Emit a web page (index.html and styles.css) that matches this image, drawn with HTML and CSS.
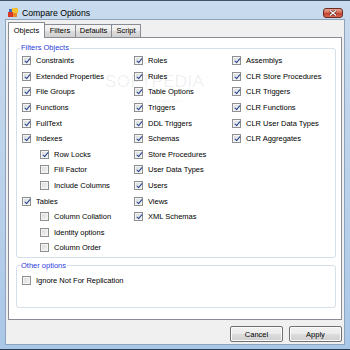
FILE: index.html
```html
<!DOCTYPE html>
<html lang="en">
  <head>
    <meta charset="UTF-8">
    <title>Compare Options</title>
    <link rel="stylesheet" href="styles.css">
  </head>
  <body>
    <div class="window">
      <div class="titlebar">
        <svg class="app-icon" width="10" height="10" viewBox="0 0 10 10">
          <rect x="4" y="0" width="6" height="5" fill="#f2c230"/>
          <rect x="0" y="4" width="5" height="5" fill="#d8382a"/>
          <rect x="1" y="1" width="3" height="3" fill="#3a6cc8"/>
          <rect x="5" y="5" width="4" height="4" fill="#e88a2a"/>
        </svg>
        <span class="title">Compare Options</span>
        <div class="close-btn">
          <svg width="8" height="6" viewBox="0 0 8 6">
            <path d="M1 0.5 L7 5.5 M7 0.5 L1 5.5" stroke="#5a1d16" stroke-width="2.4"/>
            <path d="M1 0.5 L7 5.5 M7 0.5 L1 5.5" stroke="#fff" stroke-width="1.3"/>
          </svg>
        </div>
      </div>

      <div class="client">
        <div class="tabs">
          <div class="tab active">Objects</div>
          <div class="tab tab-filters">Filters</div>
          <div class="tab tab-defaults">Defaults</div>
          <div class="tab tab-script">Script</div>
        </div>

        <div class="panel">
          <div class="watermark">
            <span class="wm-big">SOFTPEDIA<sup>™</sup></span>
            <span class="wm-small">www.softpedia.com</span>
          </div>

          <fieldset class="group filters">
            <legend>Filters Objects</legend>
            <div class="columns">
              <div class="col">
                <div class="row"><span class="cb on"></span>Constraints</div>
                <div class="row"><span class="cb on"></span>Extended Properties</div>
                <div class="row"><span class="cb on"></span>File Groups</div>
                <div class="row"><span class="cb on"></span>Functions</div>
                <div class="row"><span class="cb on"></span>FullText</div>
                <div class="row"><span class="cb on"></span>Indexes</div>
                <div class="row sub"><span class="cb on"></span>Row Locks</div>
                <div class="row sub"><span class="cb"></span>Fill Factor</div>
                <div class="row sub"><span class="cb"></span>Include Columns</div>
                <div class="row"><span class="cb on"></span>Tables</div>
                <div class="row sub"><span class="cb"></span>Column Collation</div>
                <div class="row sub"><span class="cb"></span>Identity options</div>
                <div class="row sub"><span class="cb"></span>Column Order</div>
              </div>
              <div class="col">
                <div class="row"><span class="cb on"></span>Roles</div>
                <div class="row"><span class="cb on"></span>Rules</div>
                <div class="row"><span class="cb on"></span>Table Options</div>
                <div class="row"><span class="cb on"></span>Triggers</div>
                <div class="row"><span class="cb on"></span>DDL Triggers</div>
                <div class="row"><span class="cb on"></span>Schemas</div>
                <div class="row"><span class="cb on"></span>Store Procedures</div>
                <div class="row"><span class="cb on"></span>User Data Types</div>
                <div class="row"><span class="cb on"></span>Users</div>
                <div class="row"><span class="cb on"></span>Views</div>
                <div class="row"><span class="cb on"></span>XML Schemas</div>
              </div>
              <div class="col">
                <div class="row"><span class="cb on"></span>Assemblys</div>
                <div class="row"><span class="cb on"></span>CLR Store Procedures</div>
                <div class="row"><span class="cb on"></span>CLR Triggers</div>
                <div class="row"><span class="cb on"></span>CLR Functions</div>
                <div class="row"><span class="cb on"></span>CLR User Data Types</div>
                <div class="row"><span class="cb on"></span>CLR Aggregates</div>
              </div>
            </div>
          </fieldset>

          <fieldset class="group other">
            <legend>Other options</legend>
            <div class="row"><span class="cb"></span>Ignore Not For Replication</div>
          </fieldset>
        </div>

        <div class="actions">
          <button class="btn">Cancel</button>
          <button class="btn">Apply</button>
        </div>
      </div>
    </div>
  </body>
</html>
```

FILE: styles.css
```css
* {
  box-sizing: border-box;
}

body {
  margin: 0;
  font-family: "Liberation Sans", Arial, sans-serif;
  font-size: 7.5px;
  color: #000;
}

.window {
  width: 350px;
  height: 350px;
  display: flex;
  flex-direction: column;
  border-top: 1px solid #3e5268;
  border-bottom: 1px solid #2c3c4e;
  background: linear-gradient(#c9dbee, #b8d0ea 60%, #a9c7e8);
}

/* title bar */
.titlebar {
  height: 18px;
  display: flex;
  align-items: flex-start;
  padding: 7px 7px 0 8px;
}

.app-icon {
  flex: none;
  margin-right: 4px;
}

.title {
  font-size: 8.7px;
  line-height: 10px;
  color: #000;
}

.close-btn {
  margin-left: auto;
  width: 20px;
  height: 10px;
  border: 1px solid #6b2a22;
  border-radius: 3px;
  background: linear-gradient(#e9a796, #d46a55 45%, #c2412f 55%, #d66a4f);
  display: flex;
  align-items: center;
  justify-content: center;
}

/* client area */
.client {
  flex: 1;
  margin: 0 5px 4px 5px;
  border: 1px solid #8ea3bc;
  background: #f0f0f0;
  display: flex;
  flex-direction: column;
}

.tabs {
  display: flex;
  align-items: flex-end;
  height: 17px;
  padding: 2px 0 0 2px;
}

.tab {
  height: 13px;
  line-height: 12px;
  text-align: center;
  border: 1px solid #898c95;
  border-bottom: none;
  margin-left: -1px;
  background: linear-gradient(#f3f3f3, #ebebeb 50%, #dddddd 50%, #d0d0d0);
}

.tab.active {
  position: relative;
  z-index: 2;
  margin-left: 0;
  width: 37px;
  height: 16px;
  line-height: 15px;
  margin-bottom: -1px;
  background: #fff;
}

.tab-filters {
  width: 32px;
}

.tab-defaults {
  width: 37px;
}

.tab-script {
  width: 30px;
}

.panel {
  position: relative;
  height: 283px;
  margin: 0 2px 0 2px;
  border: 1px solid #898c95;
  background: #fff;
  padding: 5px 5px 0 7px;
}

.watermark {
  position: absolute;
  left: 96px;
  top: 30px;
  display: flex;
  flex-direction: column;
  color: rgba(0, 0, 0, 0.07);
  pointer-events: none;
}

.wm-big {
  font-size: 17px;
  line-height: 20px;
  letter-spacing: 0.3px;
}

.wm-big sup {
  font-size: 5px;
}

.wm-small {
  font-size: 6px;
  margin: 6px 0 0 26px;
  color: rgba(0, 0, 0, 0.09);
}

/* group boxes */
.group {
  margin: 0;
  border: 1px solid #d5dfe5;
  border-radius: 3px;
  padding: 0 4px 1px 5px;
}

.group legend {
  color: #2b3bdc;
  line-height: 10px;
  padding: 0 1px;
  margin-left: -2px;
}

.other {
  margin-top: 3px;
  padding-top: 2px;
  padding-bottom: 19px;
}

.columns {
  display: grid;
  grid-template-columns: 112px 98px 1fr;
}

.row {
  display: flex;
  align-items: center;
  height: 15.6px;
  white-space: nowrap;
}

.row.sub {
  padding-left: 18px;
}

.cb {
  position: relative;
  flex: none;
  width: 9px;
  height: 9px;
  margin-right: 5px;
  border: 1px solid #8e8f8f;
  background: linear-gradient(135deg, #d6d8db, #f6f6f6);
  box-shadow: inset 0 0 0 1px #f4f4f4;
}

.cb.on::after {
  content: "";
  position: absolute;
  left: 2.5px;
  top: 0;
  width: 2px;
  height: 5px;
  border: solid #24448c;
  border-width: 0 1.5px 1.5px 0;
  transform: rotate(40deg);
}

/* buttons */
.actions {
  display: flex;
  justify-content: flex-end;
  gap: 6px;
  margin-top: 6px;
  padding-right: 2px;
}

.btn {
  width: 53px;
  height: 16px;
  padding: 0;
  font-family: inherit;
  font-size: 7.5px;
  color: #000;
  border: 1px solid #707070;
  border-radius: 2px;
  background: linear-gradient(#f2f2f2, #ebebeb 50%, #dddddd 50%, #cfcfcf);
  box-shadow: inset 0 0 0 1px #fbfbfb;
}
```
